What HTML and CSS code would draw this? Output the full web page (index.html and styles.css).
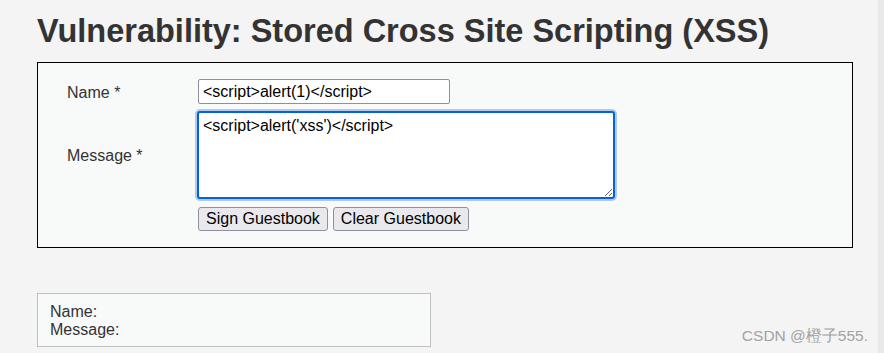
FILE: index.html
```html
<!DOCTYPE html>
<html lang="en">
<head>
    <meta charset="UTF-8">
    <title>Vulnerability: Stored Cross Site Scripting (XSS)</title>
    <link rel="stylesheet" href="styles.css">
</head>
<body>

    <div class="page">
        <h1 class="page-title">Vulnerability: Stored Cross Site Scripting (XSS)</h1>

        <form class="guest-form" onsubmit="return false;">
            <label class="field-label" for="txtName">Name *</label>
            <input type="text" id="txtName" class="txt-name" value="<script>alert(1)</script>">

            <label class="field-label" for="mtxMessage">Message *</label>
            <textarea id="mtxMessage" class="txt-message">&lt;script&gt;alert('xss')&lt;/script&gt;</textarea>

            <div></div>
            <div class="actions">
                <button type="submit" class="btn">Sign Guestbook</button>
                <button type="button" class="btn">Clear Guestbook</button>
            </div>
        </form>

        <div class="entry">
            <div>Name: </div>
            <div>Message: </div>
        </div>

        <div class="watermark">CSDN @橙子555.</div>
    </div>

    <div class="scroll-strip"></div>

</body>
</html>
```

FILE: styles.css
```css
* { box-sizing: border-box; font-family: 'Liberation Sans', Arial, sans-serif; }

body { margin: 0; background: #f4f4f4; color: #333; height: 353px; display: flex; overflow: hidden; }

.page { flex: 1; padding-left: 37px; position: relative; }
.scroll-strip { width: 6px; background: #e9e9e9; }

/* TITULO */
.page-title { margin: 0; padding-top: 12px; font-size: 32.5px; line-height: 38px; font-weight: 700; color: #333; }

/* FORM */
.guest-form { margin-top: 12px; width: 816px; border: 1px solid #000; background: #f8f9f9; padding: 16px 0 16px 29px; display: grid; grid-template-columns: 131px auto; row-gap: 7px; align-items: center; justify-items: start; }
.field-label { font-size: 16px; color: #333; padding-top: 2px; }

.txt-name { width: 252px; height: 25px; margin: 0; padding: 1px 4px 0; border: 1px solid #8f8f9d; border-radius: 2px; background: #fff; font-size: 16px; color: #000; }
.txt-message { width: 418px; height: 88px; margin: 0 0 0 -1px; padding: 4px 4px; border: 2px solid #0062e0; border-radius: 3px; box-shadow: 0 0 0 2px #b3c9ec; background: #fff; font-size: 16px; color: #000; resize: both; outline: none; }

.actions { display: flex; gap: 5px; margin-top: 1px; }
.btn { height: 24px; padding: 0 7px; border: 1px solid #8f8f9d; border-radius: 3px; background: #e9e9ed; color: #000; font-size: 16px; }

/* ENTRADAS */
.entry { margin-top: 45px; width: 394px; border: 1px solid #c0c0c0; background: #f8f9f9; padding: 9px 12px 7px 12px; font-size: 16px; line-height: 18px; color: #333; }

.watermark { position: absolute; right: 10px; bottom: 6px; font-size: 15.5px; color: #a2a2a2; }
```
